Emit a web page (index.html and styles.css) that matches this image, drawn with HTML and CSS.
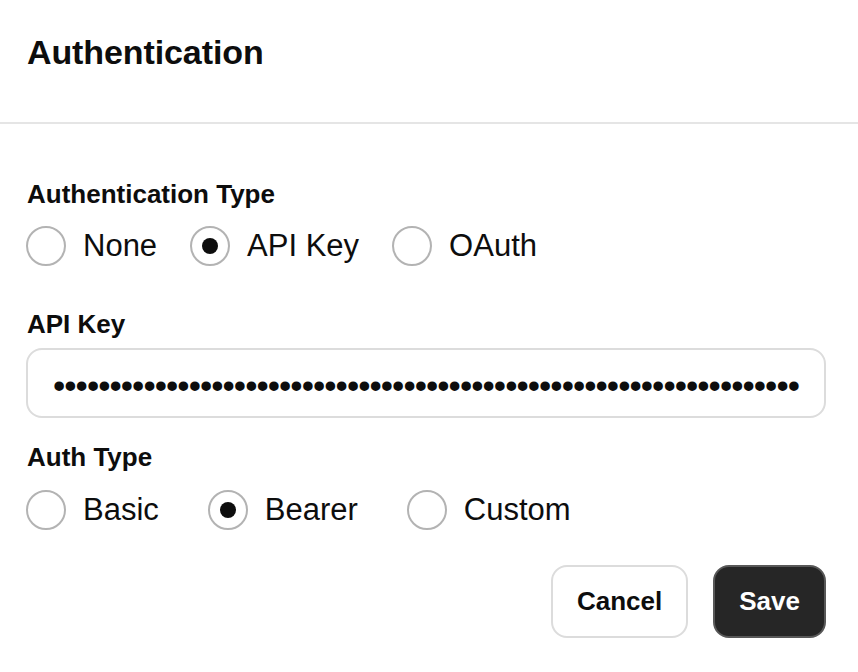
FILE: index.html
```html
<!DOCTYPE html>
<html lang="en">
<head>
<meta charset="utf-8">
<title>Authentication</title>
<link rel="stylesheet" href="styles.css">
</head>
<body>
<div class="dialog">
  <header class="dialog-header">
    <h1 class="title">Authentication</h1>
  </header>
  <main class="dialog-body">
    <div class="field">
      <div class="label">Authentication Type</div>
      <div class="radio-group group-wide-a">
        <label class="option"><span class="radio"></span><span class="option-text">None</span></label>
        <label class="option"><span class="radio checked"></span><span class="option-text">API Key</span></label>
        <label class="option"><span class="radio"></span><span class="option-text">OAuth</span></label>
      </div>
    </div>
    <div class="field field-key">
      <div class="label">API Key</div>
      <div class="input"><span class="dots">••••••••••••••••••••••••••••••••••••••••••••••••••••••••••••••••••</span></div>
    </div>
    <div class="field field-auth">
      <div class="label">Auth Type</div>
      <div class="radio-group group-wide-b">
        <label class="option"><span class="radio"></span><span class="option-text">Basic</span></label>
        <label class="option"><span class="radio checked"></span><span class="option-text">Bearer</span></label>
        <label class="option"><span class="radio"></span><span class="option-text">Custom</span></label>
      </div>
    </div>
    <div class="actions">
      <button class="btn btn-secondary">Cancel</button>
      <button class="btn btn-primary">Save</button>
    </div>
  </main>
</div>
</body>
</html>
```

FILE: styles.css
```css
* { box-sizing: border-box; }
html, body { margin: 0; padding: 0; background: #fff; }
body {
  font-family: "Liberation Sans", Arial, sans-serif;
  color: #0d0d0d;
}
.dialog { width: 858px; }
.dialog-header {
  height: 124px;
  padding: 32px 27px 0;
  border-bottom: 2px solid #e5e5e5;
}
.title {
  margin: 0;
  font-size: 34px;
  line-height: 40px;
  font-weight: 700;
  letter-spacing: -0.1px;
}
.dialog-body {
  padding: 54px 32px 0 26px;
}
.label {
  font-size: 26px;
  line-height: 32px;
  font-weight: 700;
  padding-left: 1px;
}
.radio-group {
  display: flex;
  align-items: center;
  margin-top: 16px;
}
.option {
  display: flex;
  align-items: center;
  gap: 17px;
}
.group-wide-a { gap: 33px; }
.group-wide-b { gap: 49px; }
.radio {
  width: 40px;
  height: 40px;
  border: 2px solid #b3b3b3;
  border-radius: 50%;
  display: flex;
  align-items: center;
  justify-content: center;
}
.radio.checked::after {
  content: "";
  width: 16px;
  height: 16px;
  border-radius: 50%;
  background: #0d0d0d;
}
.option-text {
  font-size: 31px;
  line-height: 40px;
}
.field-key { margin-top: 42px; }
.input {
  margin-top: 8px;
  height: 70px;
  border: 2px solid #dcdcdc;
  border-radius: 16px;
  padding: 0 25px;
  display: flex;
  align-items: center;
  overflow: hidden;
}
.dots {
  font-size: 35px;
  line-height: 40px;
  white-space: nowrap;
  padding-top: 6px;
  letter-spacing: -0.95px;
}
.field-auth { margin-top: 23px; }
.field-auth .radio-group { margin-top: 17px; }
.actions {
  display: flex;
  justify-content: flex-end;
  gap: 25px;
  margin-top: 35px;
}
.btn {
  height: 73px;
  padding: 0 24px;
  border-radius: 16px;
  font-family: inherit;
  font-size: 26px;
  font-weight: 700;
}
.btn-secondary {
  background: #fff;
  color: #0d0d0d;
  border: 2px solid #dcdcdc;
}
.btn-primary {
  background: #262626;
  color: #fff;
  border: 2px solid #585858;
}
```
